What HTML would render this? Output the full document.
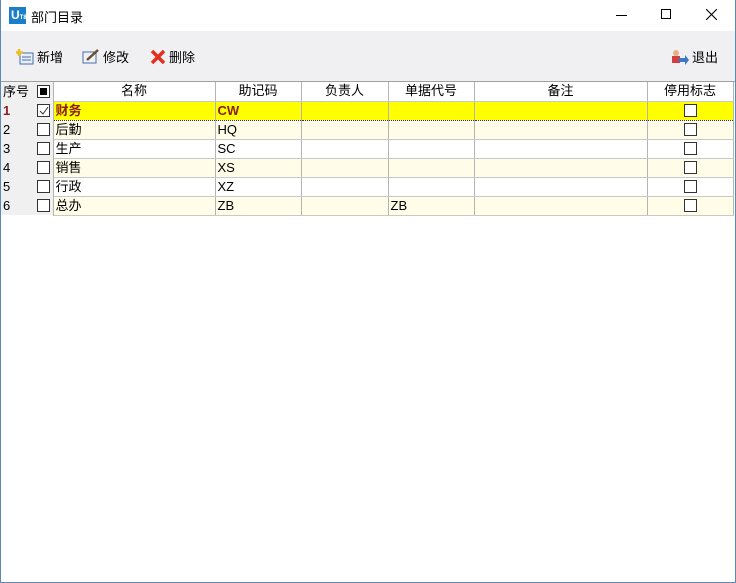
<!DOCTYPE html>
<html><head><meta charset="utf-8"><style>
*{margin:0;padding:0;box-sizing:border-box}
body{width:736px;height:583px;overflow:hidden;background:#fff;font-family:"Liberation Sans","Noto Sans CJK SC",sans-serif;font-size:13px;color:#000;position:relative}
.frame{position:absolute;left:0;top:0;width:736px;height:583px;border:1px solid #5a8ab8;border-top:none}
.title{position:absolute;left:0;top:0;width:736px;height:31px;background:#fff}
.logo{position:absolute;left:9px;top:7px;width:17px;height:17px;background:#1a7fc8;color:#fff;font-size:12px;font-weight:bold;line-height:17px;padding-left:2px}
.ttext{position:absolute;left:31px;top:7px;font-size:13px}
.tb{position:absolute;left:1px;top:31px;width:734px;height:50px;background:#f0eff2}
.btn{position:absolute;top:16px;font-size:13px;display:flex;align-items:center;gap:3px}
.grid{position:absolute;left:1px;top:81px;width:734px;border-top:1px solid #a0a0a0}
table{border-collapse:collapse;table-layout:fixed}
td{height:19px;border-right:1px solid #b4b4b4;border-bottom:1px solid #c8c8c8;padding:0 2px;font-size:13px;line-height:18px;white-space:nowrap;overflow:hidden}
td.s{background:#f0f0f0;border-right:none;border-bottom:none;padding-left:2px}
td.c{background:#f0f0f0;border-bottom:none;text-align:center}
.hd td{text-align:center}
.cb{display:inline-block;width:13px;height:13px;border:1px solid #333;background:#fff;vertical-align:middle;position:relative;top:-1px}
tr.o td{background:#fffde8}
tr.o td.s,tr.o td.c{background:#f0f0f0}
tr.sel td{background:#ffff00;border-top:1px dotted #333;border-bottom:1px dotted #333;font-weight:bold;color:#8b1a1a}
tr.sel td.s,tr.sel td.c{background:#f0f0f0;border-top:none;border-bottom:none}
</style></head><body>
<div class="title"><div class="logo">U<span style="font-size:6px">T8</span></div><div class="ttext">部门目录</div>
<div style="position:absolute;left:616px;top:15px;width:11px;height:1px;background:#000"></div>
<div style="position:absolute;left:661px;top:9px;width:10px;height:10px;border:1px solid #000"></div>
<svg style="position:absolute;left:706px;top:9px" width="11" height="11"><path d="M0 0L11 11M11 0L0 11" stroke="#000" stroke-width="1.1"/></svg>
</div>
<div class="tb">
<div class="btn" style="left:15px"><svg width="18" height="16"><rect x="4" y="4" width="13" height="11" fill="#e8eef8" stroke="#4a6ea8"/><path d="M6 8h9M6 11h9" stroke="#4a6ea8"/><path d="M3 0v7M0 3.5h7" stroke="#e8c020" stroke-width="2.5"/></svg>新增</div>
<div class="btn" style="left:81px"><svg width="18" height="16"><rect x="1" y="3" width="13" height="11" fill="#eef2f8" stroke="#4a6ea8"/><path d="M5 11L16 1" stroke="#6a5030" stroke-width="2.5"/></svg>修改</div>
<div class="btn" style="left:149px"><svg width="16" height="16"><path d="M2 2L14 14M14 2L2 14" stroke="#e03020" stroke-width="3.5"/></svg>删除</div>
<div class="btn" style="left:670px"><svg width="18" height="16"><circle cx="5" cy="4" r="3" fill="#e8b080"/><rect x="1" y="7" width="8" height="7" fill="#d04040"/><path d="M8 9h6v-3l4 5-4 5v-3H8z" fill="#3a78c8"/></svg>退出</div>
</div>
<div class="grid"><table>
<colgroup><col style="width:33px"><col style="width:19px"><col style="width:162px"><col style="width:86px"><col style="width:87px"><col style="width:86px"><col style="width:173px"><col style="width:86px"></colgroup>
<tr class="hd"><td class="s" style="text-align:left">序号</td><td class="c"><span class="cb"><span style="position:absolute;left:2px;top:2px;width:7px;height:7px;background:#000"></span></span></td><td>名称</td><td>助记码</td><td>负责人</td><td>单据代号</td><td>备注</td><td>停用标志</td></tr>
<tr class="sel"><td class="s" style="color:#8b1a1a">1</td><td class="c"><span class="cb"><svg style="position:absolute;left:1px;top:1px" width="10" height="10"><path d="M1 5l3 3 5-7" stroke="#333" fill="none"/></svg></span></td><td>财务</td><td>CW</td><td></td><td></td><td></td><td style="text-align:center"><span class="cb"></span></td></tr>
<tr class="o"><td class="s">2</td><td class="c"><span class="cb"></span></td><td>后勤</td><td>HQ</td><td></td><td></td><td></td><td style="text-align:center"><span class="cb"></span></td></tr>
<tr><td class="s">3</td><td class="c"><span class="cb"></span></td><td>生产</td><td>SC</td><td></td><td></td><td></td><td style="text-align:center"><span class="cb"></span></td></tr>
<tr class="o"><td class="s">4</td><td class="c"><span class="cb"></span></td><td>销售</td><td>XS</td><td></td><td></td><td></td><td style="text-align:center"><span class="cb"></span></td></tr>
<tr><td class="s">5</td><td class="c"><span class="cb"></span></td><td>行政</td><td>XZ</td><td></td><td></td><td></td><td style="text-align:center"><span class="cb"></span></td></tr>
<tr class="o"><td class="s">6</td><td class="c"><span class="cb"></span></td><td>总办</td><td>ZB</td><td></td><td>ZB</td><td></td><td style="text-align:center"><span class="cb"></span></td></tr>
</table></div>
<div class="frame"></div>
</body></html>
